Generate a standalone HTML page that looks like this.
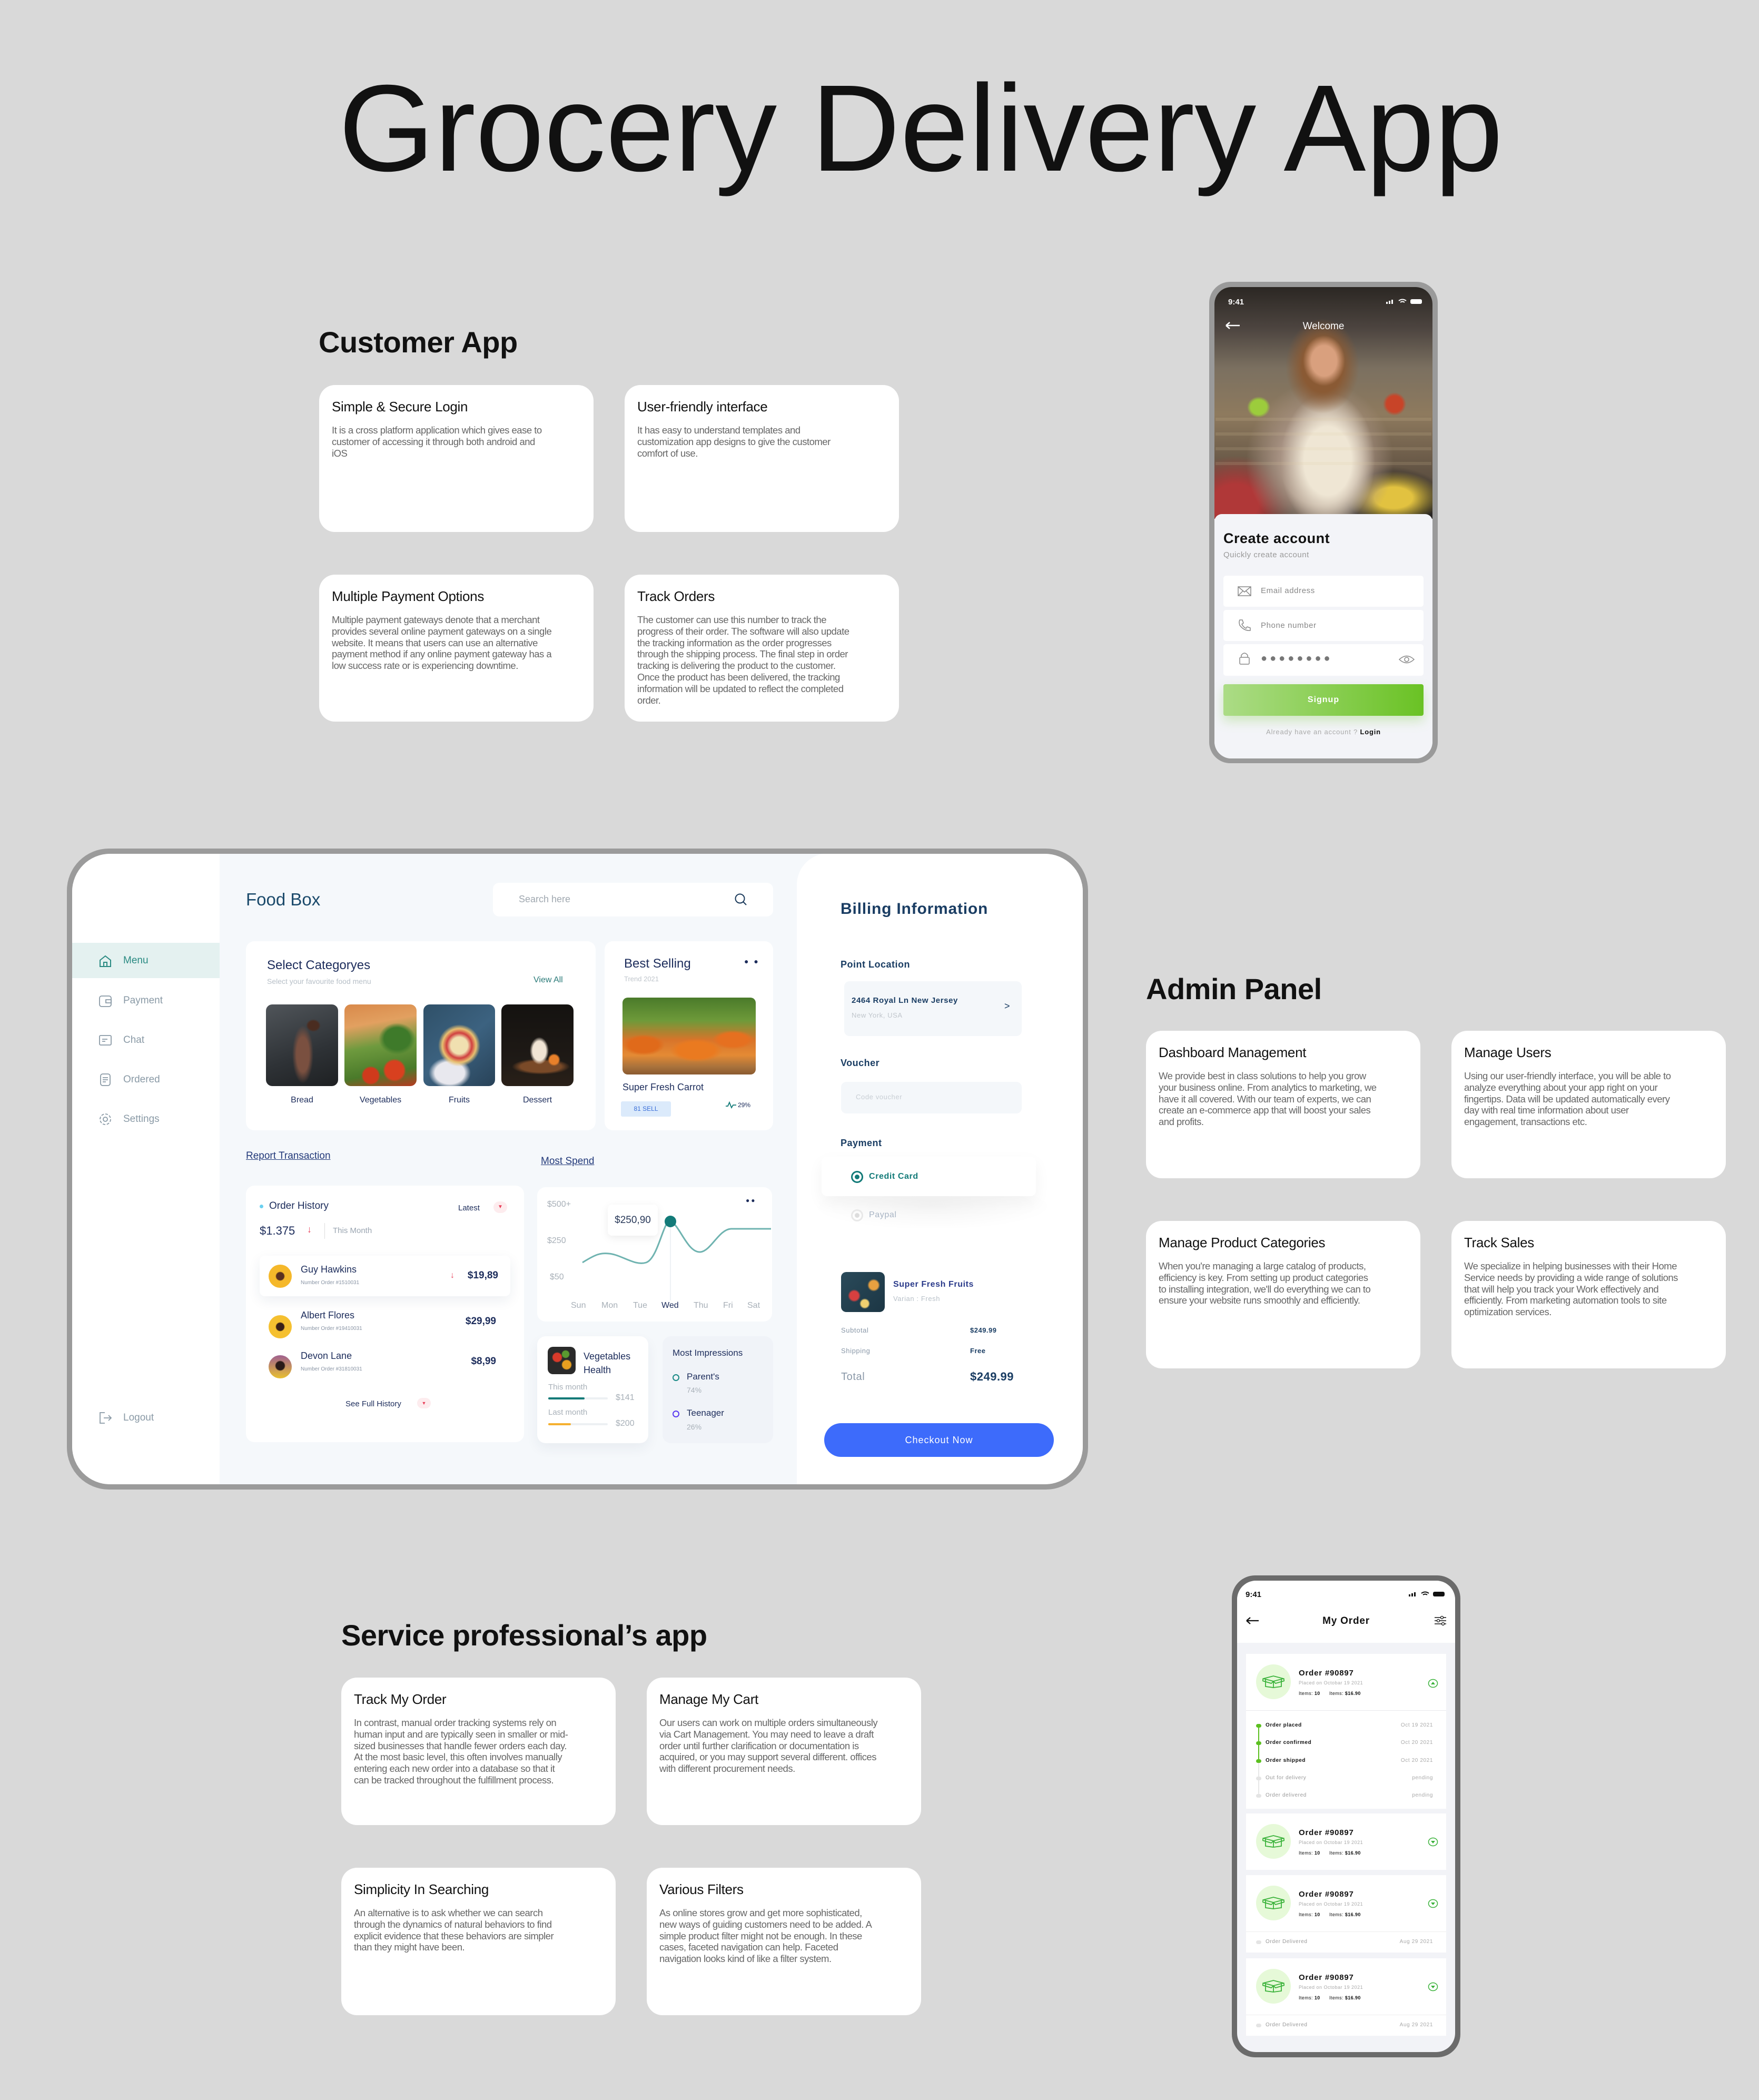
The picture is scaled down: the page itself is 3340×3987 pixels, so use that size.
<!DOCTYPE html>
<html><head><meta charset="utf-8">
<style>
*{margin:0;padding:0;box-sizing:border-box}
body{width:3340px;height:3987px;background:#d9d9d9;font-family:"Liberation Sans",sans-serif;position:relative;overflow:hidden}
.a{position:absolute}
.h2{position:absolute;font-size:56px;color:#111;font-weight:bold;letter-spacing:-0.5px}
.card{position:absolute;width:521px;background:#fff;border-radius:30px;padding:22px 24px}
.card h3{font-size:26px;font-weight:normal;color:#111;margin-top:4px;margin-bottom:18px;letter-spacing:-0.3px}
.card p{font-size:18.5px;line-height:21.8px;color:#666;letter-spacing:-0.5px;white-space:nowrap}
.n{color:#1c2c5b}
.g{color:#9aa5b1}
</style></head><body>

<div class="a" style="left:643px;top:128px;white-space:nowrap;font-size:234px;line-height:230px;color:#111">Grocery Delivery App</div>

<!-- Customer App -->
<div class="h2" style="left:605px;top:617px">Customer App</div>
<div class="card" style="left:606px;top:731px;height:279px"><h3>Simple &amp; Secure Login</h3><p>It is a cross platform application which gives ease to<br>customer of accessing it through both android and<br>iOS</p></div>
<div class="card" style="left:1186px;top:731px;height:279px"><h3>User-friendly interface</h3><p>It has easy to understand templates and<br>customization app designs to give the customer<br>comfort of use.</p></div>
<div class="card" style="left:606px;top:1091px;height:279px"><h3>Multiple Payment Options</h3><p>Multiple payment gateways denote that a merchant<br>provides several online payment gateways on a single<br>website. It means that users can use an alternative<br>payment method if any online payment gateway has a<br>low success rate or is experiencing downtime.</p></div>
<div class="card" style="left:1186px;top:1091px;height:279px"><h3>Track Orders</h3><p>The customer can use this number to track the<br>progress of their order. The software will also update<br>the tracking information as the order progresses<br>through the shipping process. The final step in order<br>tracking is delivering the product to the customer.<br>Once the product has been delivered, the tracking<br>information will be updated to reflect the completed<br>order.</p></div>

<!-- Phone 1 -->
<div class="a" style="left:2296px;top:535px;width:434px;height:914px;border-radius:40px;background:#9a9a9a"></div>
<div class="a" style="left:2306px;top:545px;width:414px;height:895px;border-radius:32px;background:#f3f4f8;overflow:hidden">
  <div class="a" style="left:0;top:0;width:414px;height:440px;background:
    radial-gradient(ellipse 40px 48px at 208px 140px,#d9a07e 60%,transparent 100%),
    radial-gradient(ellipse 70px 90px at 205px 150px,#8a5a34 55%,transparent 100%),
    radial-gradient(ellipse 90px 130px at 215px 330px,#efe6d4 50%,transparent 100%),
    radial-gradient(ellipse 140px 150px at 200px 330px,#a69182 55%,transparent 100%),
    radial-gradient(ellipse 90px 50px at 340px 400px,#e2c240 40%,transparent 100%),
    radial-gradient(ellipse 120px 80px at 330px 420px,#1e1e1e 55%,transparent 100%),
    radial-gradient(ellipse 110px 90px at 40px 410px,#b03838 40%,transparent 100%),
    radial-gradient(ellipse 22px 20px at 84px 228px,#9ccc3c 70%,transparent 100%),
    radial-gradient(ellipse 22px 22px at 342px 222px,#c84428 70%,transparent 100%),
    linear-gradient(180deg,#2b2723 0%,#4d4540 18%,#7b7060 35%,#8e7a5e 55%,#6a5a48 75%,#3e3630 100%)"></div>
  <div class="a" style="left:2px;top:226px;width:410px;height:120px;background:repeating-linear-gradient(180deg,transparent 0 22px,rgba(220,200,160,.25) 22px 28px);opacity:.6"></div>
  <div class="a" style="left:26px;top:20px;color:#fff;font-size:15px;font-weight:bold">9:41</div>
  <div class="a" style="left:326px;top:20px;width:70px;height:12px">
    <svg width="70" height="12"><rect x="0" y="7" width="3" height="4" fill="#fff"/><rect x="5" y="5" width="3" height="6" fill="#fff"/><rect x="10" y="3" width="3" height="8" fill="#fff"/><path d="M24 5 Q31 0 38 5 M27 8 Q31 5 35 8" stroke="#fff" stroke-width="2" fill="none"/><rect x="46" y="2" width="22" height="9" rx="3" fill="#fff"/></svg></div>
  <svg class="a" style="left:20px;top:65px" width="30" height="16"><path d="M2 8 H28 M2 8 L9 2 M2 8 L9 14" stroke="#fff" stroke-width="2.5" fill="none"/></svg>
  <div class="a" style="left:0;top:64px;width:414px;text-align:center;color:#fff;font-size:19px">Welcome</div>
  <div class="a" style="left:0;top:431px;width:414px;height:470px;background:#f3f4f8;border-radius:14px 14px 0 0"></div>
  <div class="a" style="left:17px;top:462px;font-size:27px;font-weight:bold;color:#111;letter-spacing:.5px">Create account</div>
  <div class="a" style="left:17px;top:500px;font-size:15px;color:#999;letter-spacing:.5px">Quickly create account</div>
  <div class="a" style="left:17px;top:548px;width:380px;height:59px;background:#fff;border-radius:5px"></div>
  <div class="a" style="left:17px;top:613px;width:380px;height:59px;background:#fff;border-radius:5px"></div>
  <div class="a" style="left:17px;top:678px;width:380px;height:60px;background:#fff;border-radius:5px"></div>
  <svg class="a" style="left:44px;top:568px" width="26" height="20"><rect x="1" y="1" width="24" height="17" fill="none" stroke="#888" stroke-width="1.5"/><path d="M1 1 L13 11 L25 1 M1 18 L10 9 M25 18 L16 9" stroke="#888" stroke-width="1.5" fill="none"/></svg>
  <div class="a" style="left:88px;top:568px;font-size:15px;color:#888;letter-spacing:.6px">Email address</div>
  <svg class="a" style="left:44px;top:630px" width="26" height="24"><path d="M4 2 L9 2 L11 8 L8 10 Q11 16 16 18 L18 15 L24 17 L24 22 Q12 23 4 12 Q2 6 4 2Z" fill="none" stroke="#888" stroke-width="1.5"/></svg>
  <div class="a" style="left:88px;top:634px;font-size:15px;color:#888;letter-spacing:.6px">Phone number</div>
  <svg class="a" style="left:47px;top:692px" width="20" height="26"><path d="M4 11 V7 Q10 -1 16 7 V11" fill="none" stroke="#888" stroke-width="1.5"/><rect x="1" y="11" width="18" height="13" rx="2" fill="none" stroke="#888" stroke-width="1.5"/></svg>
  <div class="a" style="left:88px;top:694px;font-size:20px;color:#777;letter-spacing:5px">●●●●●●●●</div>
  <svg class="a" style="left:350px;top:698px" width="30" height="18"><path d="M1 9 Q15 -4 29 9 Q15 22 1 9Z" fill="none" stroke="#888" stroke-width="1.5"/><circle cx="15" cy="9" r="4" fill="none" stroke="#888" stroke-width="1.5"/></svg>
  <div class="a" style="left:17px;top:754px;width:380px;height:60px;border-radius:4px;background:linear-gradient(90deg,#acdc86,#6ac224);box-shadow:0 10px 20px rgba(140,210,90,.35);color:#fff;font-weight:bold;font-size:16px;text-align:center;line-height:60px;letter-spacing:1px">Signup</div>
  <div class="a" style="left:0;top:837px;width:414px;text-align:center;font-size:13px;color:#aaa;letter-spacing:.8px">Already have an account ? <b style="color:#111">Login</b></div>
</div>

<!-- Dashboard -->
<div class="a" style="left:127px;top:1611px;width:1939px;height:1217px;border-radius:80px;background:#9b9b9b"></div>
<div class="a" style="left:137px;top:1621px;width:1919px;height:1197px;border-radius:72px;background:#f5f8fb;overflow:hidden">
  <div class="a" style="left:0;top:0;width:280px;height:1197px;background:#fff"></div>
  <div class="a" style="left:0;top:169px;width:280px;height:67px;background:#e4f1f0"></div>
  <div class="a" style="left:1376px;top:-1px;width:543px;height:1198px;background:#fff;border-radius:60px 0 0 0"></div>
</div>
<!-- sidebar items -->
<svg class="a" style="left:187px;top:1812px" width="26" height="26"><path d="M3 11 L13 3 L23 11 V23 H3Z M10 23 V15 H16 V23" fill="none" stroke="#2a8a82" stroke-width="2"/></svg>
<div class="a" style="left:234px;top:1813px;font-size:19px;color:#2a8a82">Menu</div>
<svg class="a" style="left:187px;top:1888px" width="26" height="26"><rect x="2" y="3" width="22" height="20" rx="4" fill="none" stroke="#8a9aa6" stroke-width="1.8"/><path d="M14 10 H24 V16 H14Z" fill="none" stroke="#8a9aa6" stroke-width="1.8"/></svg>
<div class="a" style="left:234px;top:1889px;font-size:19px;color:#8a9aa6">Payment</div>
<svg class="a" style="left:187px;top:1963px" width="26" height="26"><rect x="2" y="3" width="22" height="18" rx="2" fill="none" stroke="#8a9aa6" stroke-width="1.8"/><path d="M7 10 H17 M7 14 H13" stroke="#8a9aa6" stroke-width="1.8"/></svg>
<div class="a" style="left:234px;top:1964px;font-size:19px;color:#8a9aa6">Chat</div>
<svg class="a" style="left:189px;top:2037px" width="22" height="26"><rect x="2" y="2" width="18" height="22" rx="4" fill="none" stroke="#8a9aa6" stroke-width="1.8"/><path d="M6 9 H16 M6 13 H16 M6 17 H12" stroke="#8a9aa6" stroke-width="1.8"/></svg>
<div class="a" style="left:234px;top:2039px;font-size:19px;color:#8a9aa6">Ordered</div>
<svg class="a" style="left:187px;top:2112px" width="26" height="26"><circle cx="13" cy="13" r="4" fill="none" stroke="#8a9aa6" stroke-width="1.8"/><circle cx="13" cy="13" r="10" fill="none" stroke="#8a9aa6" stroke-width="1.8" stroke-dasharray="5 2.8"/></svg>
<div class="a" style="left:234px;top:2114px;font-size:19px;color:#8a9aa6">Settings</div>
<svg class="a" style="left:187px;top:2679px" width="26" height="26"><path d="M12 3 H3 V23 H12 M10 13 H24 M19 8 L24 13 L19 18" fill="none" stroke="#8a9aa6" stroke-width="1.8"/></svg>
<div class="a" style="left:234px;top:2681px;font-size:19px;color:#8a9aa6">Logout</div>

<div class="a" style="left:467px;top:1689px;font-size:33px;color:#1b4a6b">Food Box</div>
<div class="a" style="left:936px;top:1676px;width:532px;height:64px;background:#fff;border-radius:12px"></div>
<div class="a" style="left:985px;top:1697px;font-size:18px;color:#a0a8b0">Search here</div>
<svg class="a" style="left:1394px;top:1695px" width="26" height="26"><circle cx="11" cy="11" r="8.5" fill="none" stroke="#1b3a5b" stroke-width="2"/><path d="M17 17 L23 23" stroke="#1b3a5b" stroke-width="2"/></svg>

<div class="a" style="left:467px;top:1787px;width:664px;height:359px;background:#fff;border-radius:16px"></div>
<div class="a n" style="left:507px;top:1819px;font-size:24px">Select Categoryes</div>
<div class="a" style="left:507px;top:1855px;font-size:14px;color:#b8c0c8">Select your favourite food menu</div>
<div class="a" style="left:1013px;top:1852px;font-size:16px;color:#2a7a78">View All</div>
<div class="a" style="left:505px;top:1907px;width:137px;height:155px;border-radius:12px;background:radial-gradient(ellipse 20px 55px at 70px 95px,#7a5040 60%,transparent 100%),radial-gradient(ellipse 14px 12px at 90px 40px,#4a2c20 70%,transparent 100%),linear-gradient(160deg,#50555a,#2e3236 60%,#1e2022)"></div>
<div class="a" style="left:654px;top:1907px;width:137px;height:155px;border-radius:12px;background:radial-gradient(circle 22px at 95px 125px,#d8401f 80%,transparent 100%),radial-gradient(circle 18px at 50px 135px,#cf3a1c 80%,transparent 100%),radial-gradient(ellipse 35px 30px at 100px 65px,#3e7a2a 70%,transparent 100%),linear-gradient(170deg,#d9894a 0%,#e2a060 25%,#6e9a3e 50%,#4a7a2a 80%,#b83a20 100%)"></div>
<div class="a" style="left:804px;top:1907px;width:136px;height:155px;border-radius:12px;background:radial-gradient(circle 40px at 68px 78px,#f0e0b0 40%,#d04040 60%,#e8c070 80%,transparent 100%),radial-gradient(ellipse 40px 30px at 50px 130px,#e8e8ee 70%,transparent 100%),linear-gradient(140deg,#2f5068,#3c6280 50%,#284258)"></div>
<div class="a" style="left:952px;top:1907px;width:137px;height:155px;border-radius:12px;background:radial-gradient(ellipse 18px 26px at 72px 88px,#f0e4d4 70%,transparent 100%),radial-gradient(circle 12px at 100px 105px,#e8802a 70%,transparent 100%),radial-gradient(ellipse 55px 15px at 75px 118px,#7a4a28 70%,transparent 100%),linear-gradient(180deg,#141210,#1f1a16 70%,#2a2018)"></div>
<div class="a n" style="left:505px;top:2080px;width:137px;text-align:center;font-size:16px">Bread</div>
<div class="a n" style="left:654px;top:2080px;width:137px;text-align:center;font-size:16px">Vegetables</div>
<div class="a n" style="left:804px;top:2080px;width:136px;text-align:center;font-size:16px">Fruits</div>
<div class="a n" style="left:952px;top:2080px;width:137px;text-align:center;font-size:16px">Dessert</div>

<div class="a" style="left:1148px;top:1787px;width:320px;height:359px;background:#fff;border-radius:16px"></div>
<div class="a n" style="left:1185px;top:1816px;font-size:24px">Best Selling</div>
<div class="a" style="left:1413px;top:1817px;font-size:14px;color:#1c2c5b;letter-spacing:3px">● ●</div>
<div class="a" style="left:1185px;top:1851px;font-size:13px;color:#c0c6cc">Trend 2021</div>
<div class="a" style="left:1182px;top:1894px;width:253px;height:146px;border-radius:10px;background:radial-gradient(ellipse 40px 20px at 40px 90px,#e06a1a 70%,transparent 100%),radial-gradient(ellipse 50px 22px at 140px 100px,#ea7a20 70%,transparent 100%),radial-gradient(ellipse 40px 18px at 210px 80px,#e67020 70%,transparent 100%),linear-gradient(180deg,#4a7a2a 0%,#6e9a3a 30%,#d8742a 55%,#e48a34 75%,#a8723c 90%,#8a5a30)"></div>
<div class="a n" style="left:1182px;top:2054px;font-size:18px">Super Fresh Carrot</div>
<div class="a" style="left:1179px;top:2091px;width:95px;height:29px;background:#dbeafb;border-radius:3px;font-size:12px;color:#3a6ed8;text-align:center;line-height:29px">81 SELL</div>
<svg class="a" style="left:1377px;top:2090px" width="22" height="16"><path d="M1 10 H5 L8 3 L12 13 L15 8 H21" fill="none" stroke="#127a78" stroke-width="1.8"/></svg>
<div class="a n" style="left:1401px;top:2091px;font-size:12px">29%</div>

<div class="a" style="left:467px;top:2184px;font-size:19px;color:#233a7a;text-decoration:underline">Report Transaction</div>
<div class="a" style="left:1027px;top:2194px;font-size:19px;color:#233a7a;text-decoration:underline">Most Spend</div>

<div class="a" style="left:467px;top:2251px;width:528px;height:487px;background:#fff;border-radius:16px"></div>
<div class="a" style="left:493px;top:2287px;width:7px;height:7px;border-radius:50%;background:#6ad0f0"></div>
<div class="a n" style="left:511px;top:2279px;font-size:19px">Order History</div>
<div class="a n" style="left:870px;top:2285px;font-size:15px">Latest</div>
<div class="a" style="left:937px;top:2281px;width:26px;height:22px;border-radius:11px;background:#fdecee;color:#e8405a;font-size:10px;text-align:center;line-height:22px">▼</div>
<div class="a n" style="left:493px;top:2324px;font-size:22px">$1.375</div>
<div class="a" style="left:583px;top:2324px;font-size:18px;color:#e8405a">↓</div>
<div class="a" style="left:616px;top:2322px;width:1px;height:30px;background:#ddd"></div>
<div class="a" style="left:632px;top:2328px;font-size:15px;color:#9aa5b1">This Month</div>
<div class="a" style="left:493px;top:2384px;width:476px;height:77px;background:#fff;border-radius:10px;box-shadow:0 8px 24px rgba(30,50,90,.08)"></div>
<div class="a" style="left:510px;top:2401px;width:44px;height:44px;border-radius:50%;background:radial-gradient(circle 9px at 22px 22px,#5a3020 80%,transparent 100%),#f5b82a"></div>
<div class="a n" style="left:571px;top:2400px;font-size:18px">Guy Hawkins</div>
<div class="a" style="left:571px;top:2430px;font-size:10px;color:#8a95a5">Number Order #1510031</div>
<div class="a" style="left:855px;top:2413px;font-size:16px;color:#e8405a">↓</div>
<div class="a n" style="left:883px;top:2411px;width:63px;text-align:right;font-size:19px;font-weight:bold">$19,89</div>
<div class="a" style="left:510px;top:2497px;width:44px;height:44px;border-radius:50%;background:radial-gradient(circle 9px at 22px 22px,#3a2018 80%,transparent 100%),#f5c030"></div>
<div class="a n" style="left:571px;top:2487px;font-size:18px">Albert Flores</div>
<div class="a" style="left:571px;top:2517px;font-size:10px;color:#8a95a5">Number Order #19410031</div>
<div class="a n" style="left:870px;top:2498px;width:72px;text-align:right;font-size:19px;font-weight:bold">$29,99</div>
<div class="a" style="left:510px;top:2573px;width:44px;height:44px;border-radius:50%;background:radial-gradient(circle 10px at 22px 20px,#2a1a18 80%,transparent 100%),linear-gradient(180deg,#a06090,#e8c030)"></div>
<div class="a n" style="left:571px;top:2564px;font-size:18px">Devon Lane</div>
<div class="a" style="left:571px;top:2594px;font-size:10px;color:#8a95a5">Number Order #31810031</div>
<div class="a n" style="left:870px;top:2574px;width:72px;text-align:right;font-size:19px;font-weight:bold">$8,99</div>
<div class="a n" style="left:656px;top:2657px;font-size:15px">See Full History</div>
<div class="a" style="left:792px;top:2654px;width:26px;height:20px;border-radius:10px;background:#fdecee;color:#e8405a;font-size:9px;text-align:center;line-height:20px">▼</div>

<div class="a" style="left:1020px;top:2254px;width:446px;height:255px;background:#fff;border-radius:16px">
  <svg width="446" height="255" style="position:absolute;left:0;top:0">
    <line x1="253" y1="65" x2="253" y2="215" stroke="#e8eef2" stroke-width="1.5"/>
    <path d="M86,143 C110,128 120,124 136,126 C160,128 185,150 207,143 C230,135 240,60 253,65 C270,70 285,125 310,123 C330,121 345,80 368,79 L444,79" fill="none" stroke="#6fb3b0" stroke-width="3"/>
    <circle cx="253" cy="65" r="11" fill="#127a78"/>
  </svg>
  <div class="a" style="left:134px;top:33px;width:95px;height:59px;background:#fff;border-radius:8px;box-shadow:0 4px 16px rgba(0,0,0,.08);font-size:19px;color:#2a3a5a;text-align:center;line-height:59px">$250,90</div>
  <div class="a" style="left:19px;top:24px;font-size:16px;color:#a8b0b8">$500+</div>
  <div class="a" style="left:19px;top:93px;font-size:16px;color:#a8b0b8">$250</div>
  <div class="a" style="left:24px;top:162px;font-size:16px;color:#a8b0b8">$50</div>
  <div class="a" style="left:396px;top:18px;font-size:12px;color:#1c2c5b;letter-spacing:3px">●●</div>
  <div class="a" style="left:64px;top:216px;font-size:16px;color:#a8b0b8">Sun</div>
  <div class="a" style="left:122px;top:216px;font-size:16px;color:#a8b0b8">Mon</div>
  <div class="a" style="left:182px;top:216px;font-size:16px;color:#a8b0b8">Tue</div>
  <div class="a n" style="left:236px;top:216px;font-size:16px">Wed</div>
  <div class="a" style="left:297px;top:216px;font-size:16px;color:#a8b0b8">Thu</div>
  <div class="a" style="left:353px;top:216px;font-size:16px;color:#a8b0b8">Fri</div>
  <div class="a" style="left:399px;top:216px;font-size:16px;color:#a8b0b8">Sat</div>
</div>

<div class="a" style="left:1020px;top:2537px;width:211px;height:203px;background:#fff;border-radius:16px;box-shadow:0 10px 24px rgba(30,50,90,.06)"></div>
<div class="a" style="left:1040px;top:2557px;width:53px;height:52px;border-radius:10px;background:radial-gradient(circle 10px at 18px 20px,#d83a2a 80%,transparent 100%),radial-gradient(circle 10px at 36px 34px,#e8a020 80%,transparent 100%),radial-gradient(circle 8px at 34px 14px,#5a9a30 80%,transparent 100%),#2a2a2a"></div>
<div class="a n" style="left:1108px;top:2562px;font-size:18px;line-height:26px">Vegetables<br>Health</div>
<div class="a" style="left:1041px;top:2625px;font-size:15px;color:#a8b0b8">This month</div>
<div class="a" style="left:1041px;top:2653px;width:113px;height:4px;background:#edf0f3;border-radius:2px"><div style="width:69px;height:4px;background:#127a78;border-radius:2px"></div></div>
<div class="a" style="left:1169px;top:2645px;font-size:16px;color:#a8b0b8">$141</div>
<div class="a" style="left:1041px;top:2673px;font-size:15px;color:#a8b0b8">Last month</div>
<div class="a" style="left:1041px;top:2702px;width:113px;height:4px;background:#edf0f3;border-radius:2px"><div style="width:43px;height:4px;background:#f5b030;border-radius:2px"></div></div>
<div class="a" style="left:1169px;top:2694px;font-size:16px;color:#a8b0b8">$200</div>

<div class="a" style="left:1258px;top:2537px;width:210px;height:203px;background:#f0f3f8;border-radius:16px"></div>
<div class="a n" style="left:1277px;top:2559px;font-size:17px">Most Impressions</div>
<div class="a" style="left:1277px;top:2609px;width:13px;height:13px;border-radius:50%;border:2.5px solid #1a8a86"></div>
<div class="a n" style="left:1304px;top:2604px;font-size:17px">Parent's</div>
<div class="a" style="left:1304px;top:2631px;font-size:14px;color:#a8b0b8">74%</div>
<div class="a" style="left:1277px;top:2678px;width:13px;height:13px;border-radius:50%;border:2.5px solid #5a3af0"></div>
<div class="a n" style="left:1304px;top:2673px;font-size:17px">Teenager</div>
<div class="a" style="left:1304px;top:2701px;font-size:14px;color:#a8b0b8">26%</div>

<!-- Billing -->
<div class="a" style="left:1596px;top:1709px;font-size:30px;font-weight:bold;color:#1a3d63;letter-spacing:.8px">Billing Information</div>
<div class="a" style="left:1596px;top:1821px;font-size:18px;font-weight:bold;color:#1a3d63;letter-spacing:.5px">Point Location</div>
<div class="a" style="left:1603px;top:1863px;width:337px;height:104px;background:#f4f7fa;border-radius:10px"></div>
<div class="a" style="left:1617px;top:1891px;font-size:15px;font-weight:bold;color:#1a3d63;letter-spacing:.6px">2464 Royal Ln New Jersey</div>
<div class="a" style="left:1617px;top:1920px;font-size:13px;color:#c0c6cc;letter-spacing:.6px">New York, USA</div>
<div class="a" style="left:1907px;top:1900px;font-size:18px;color:#1a3d63">&gt;</div>
<div class="a" style="left:1596px;top:2008px;font-size:18px;font-weight:bold;color:#1a3d63;letter-spacing:.5px">Voucher</div>
<div class="a" style="left:1597px;top:2054px;width:343px;height:60px;background:#f4f7fa;border-radius:10px"></div>
<div class="a" style="left:1625px;top:2075px;font-size:13px;color:#c8ced4;letter-spacing:.6px">Code voucher</div>
<div class="a" style="left:1596px;top:2160px;font-size:18px;font-weight:bold;color:#1a3d63;letter-spacing:.5px">Payment</div>
<div class="a" style="left:1540px;top:2270px;width:460px;height:90px;background:radial-gradient(ellipse 230px 45px at 230px 20px,rgba(0,0,0,.04),transparent)"></div>
<div class="a" style="left:1560px;top:2196px;width:407px;height:75px;background:#fff;border-radius:10px;box-shadow:0 12px 30px rgba(0,0,0,.05)"></div>
<div class="a" style="left:1616px;top:2223px;width:23px;height:23px;border-radius:50%;border:3px solid #127a78"><div style="width:9px;height:9px;border-radius:50%;background:#127a78;margin:4px"></div></div>
<div class="a" style="left:1650px;top:2225px;font-size:16px;font-weight:bold;color:#127a78;letter-spacing:.6px">Credit Card</div>
<div class="a" style="left:1616px;top:2296px;width:23px;height:23px;border-radius:50%;border:3px solid #e8e8e8"><div style="width:9px;height:9px;border-radius:50%;background:#ddd;margin:4px"></div></div>
<div class="a" style="left:1650px;top:2298px;font-size:16px;color:#a8b4c4;letter-spacing:.6px">Paypal</div>
<div class="a" style="left:1597px;top:2415px;width:83px;height:76px;border-radius:10px;background:radial-gradient(circle 12px at 25px 45px,#d84040 70%,transparent 100%),radial-gradient(circle 12px at 62px 25px,#e8a040 70%,transparent 100%),radial-gradient(circle 10px at 45px 60px,#f0d070 70%,transparent 100%),linear-gradient(135deg,#2a4a5a,#1c3644)"></div>
<div class="a" style="left:1696px;top:2430px;font-size:16px;font-weight:bold;color:#2a3a8a;letter-spacing:.6px">Super Fresh Fruits</div>
<div class="a" style="left:1696px;top:2458px;font-size:13px;color:#b8c0c8;letter-spacing:.6px">Varian : Fresh</div>
<div class="a" style="left:1597px;top:2518px;font-size:13px;color:#8a98a8;letter-spacing:.6px">Subtotal</div>
<div class="a" style="left:1842px;top:2518px;font-size:13px;font-weight:bold;color:#1a3d63;letter-spacing:.5px">$249.99</div>
<div class="a" style="left:1597px;top:2557px;font-size:13px;color:#8a98a8;letter-spacing:.6px">Shipping</div>
<div class="a" style="left:1842px;top:2557px;font-size:13px;font-weight:bold;color:#1a3d63;letter-spacing:.5px">Free</div>
<div class="a" style="left:1597px;top:2603px;font-size:20px;color:#8a98a8;letter-spacing:.6px">Total</div>
<div class="a" style="left:1842px;top:2601px;font-size:22px;font-weight:bold;color:#1a3d63;letter-spacing:.5px">$249.99</div>
<div class="a" style="left:1565px;top:2702px;width:436px;height:64px;background:#3d6bfb;border-radius:32px;color:#fff;font-size:18px;text-align:center;line-height:64px;letter-spacing:1px">Checkout Now</div>

<!-- Admin -->
<div class="h2" style="left:2176px;top:1845px">Admin Panel</div>
<div class="card" style="left:2176px;top:1957px;height:280px"><h3>Dashboard Management</h3><p>We provide best in class solutions to help you grow<br>your business online. From analytics to marketing, we<br>have it all covered. With our team of experts, we can<br>create an e-commerce app that will boost your sales<br>and profits.</p></div>
<div class="card" style="left:2756px;top:1957px;height:280px"><h3>Manage Users</h3><p>Using our user-friendly interface, you will be able to<br>analyze everything about your app right on your<br>fingertips. Data will be updated automatically every<br>day with real time information about user<br>engagement, transactions etc.</p></div>
<div class="card" style="left:2176px;top:2318px;height:280px"><h3>Manage Product Categories</h3><p>When you're managing a large catalog of products,<br>efficiency is key. From setting up product categories<br>to installing integration, we'll do everything we can to<br>ensure your website runs smoothly and efficiently.</p></div>
<div class="card" style="left:2756px;top:2318px;height:280px"><h3>Track Sales</h3><p>We specialize in helping businesses with their Home<br>Service needs by providing a wide range of solutions<br>that will help you track your Work effectively and<br>efficiently. From marketing automation tools to site<br>optimization services.</p></div>

<!-- Service -->
<div class="h2" style="left:648px;top:3072px">Service professional’s app</div>
<div class="card" style="left:648px;top:3185px;height:280px"><h3>Track My Order</h3><p>In contrast, manual order tracking systems rely on<br>human input and are typically seen in smaller or mid-<br>sized businesses that handle fewer orders each day.<br>At the most basic level, this often involves manually<br>entering each new order into a database so that it<br>can be tracked throughout the fulfillment process.</p></div>
<div class="card" style="left:1228px;top:3185px;height:280px"><h3>Manage My Cart</h3><p>Our users can work on multiple orders simultaneously<br>via Cart Management. You may need to leave a draft<br>order until further clarification or documentation is<br>acquired, or you may support several different. offices<br>with different procurement needs.</p></div>
<div class="card" style="left:648px;top:3546px;height:280px"><h3>Simplicity In Searching</h3><p>An alternative is to ask whether we can search<br>through the dynamics of natural behaviors to find<br>explicit evidence that these behaviors are simpler<br>than they might have been.</p></div>
<div class="card" style="left:1228px;top:3546px;height:280px"><h3>Various Filters</h3><p>As online stores grow and get more sophisticated,<br>new ways of guiding customers need to be added. A<br>simple product filter might not be enough. In these<br>cases, faceted navigation can help. Faceted<br>navigation looks kind of like a filter system.</p></div>

<!-- Phone 2 -->
<div class="a" style="left:2339px;top:2991px;width:434px;height:915px;border-radius:44px;background:#6b6b6b"></div>
<div class="a" style="left:2349px;top:3001px;width:414px;height:895px;border-radius:36px;background:#f2f3f7;overflow:hidden">
  <div class="a" style="left:0;top:0;width:414px;height:118px;background:#fff"></div>
  <div class="a" style="left:16px;top:18px;font-size:15px;font-weight:bold;color:#111">9:41</div>
  <svg class="a" style="left:326px;top:19px" width="70" height="12"><rect x="0" y="7" width="3" height="4" fill="#111"/><rect x="5" y="5" width="3" height="6" fill="#111"/><rect x="10" y="3" width="3" height="8" fill="#111"/><path d="M24 5 Q31 0 38 5 M27 8 Q31 5 35 8" stroke="#111" stroke-width="2" fill="none"/><rect x="46" y="2" width="22" height="9" rx="3" fill="#111"/></svg>
  <svg class="a" style="left:16px;top:68px" width="26" height="16"><path d="M2 8 H25 M2 8 L9 2 M2 8 L9 14" stroke="#111" stroke-width="2.2" fill="none"/></svg>
  <div class="a" style="left:0;top:66px;width:414px;text-align:center;font-size:19px;font-weight:bold;color:#111;letter-spacing:.8px">My Order</div>
  <svg class="a" style="left:374px;top:66px" width="24" height="20"><path d="M1 4 H23 M1 10 H23 M1 16 H23" stroke="#111" stroke-width="1.5"/><circle cx="15" cy="4" r="2.5" fill="#fff" stroke="#111" stroke-width="1.3"/><circle cx="8" cy="10" r="2.5" fill="#fff" stroke="#111" stroke-width="1.3"/><circle cx="17" cy="16" r="2.5" fill="#fff" stroke="#111" stroke-width="1.3"/></svg>
</div>
<div class="a" style="left:2366px;top:3140px;width:380px;height:294px;background:#fff"></div>
<div class="a" style="left:2366px;top:3247px;width:380px;height:1px;background:#e8e8ec"></div>
<div class="a" style="left:2366px;top:3443px;width:380px;height:107px;background:#fff"></div>
<div class="a" style="left:2366px;top:3560px;width:380px;height:147px;background:#fff"></div>
<div class="a" style="left:2366px;top:3667px;width:380px;height:1px;background:#eee"></div>
<div class="a" style="left:2366px;top:3718px;width:380px;height:147px;background:#fff"></div>
<div class="a" style="left:2366px;top:3825px;width:380px;height:1px;background:#eee"></div>

<div class="a" style="left:2385px;top:3160px;width:66px;height:66px;border-radius:50%;background:#e6f9d8"></div>
<div class="a" style="left:2385px;top:3463px;width:66px;height:66px;border-radius:50%;background:#e6f9d8"></div>
<div class="a" style="left:2385px;top:3580px;width:66px;height:66px;border-radius:50%;background:#e6f9d8"></div>
<div class="a" style="left:2385px;top:3738px;width:66px;height:66px;border-radius:50%;background:#e6f9d8"></div>
<svg class="a" style="left:2397px;top:3181px" width="42" height="24"><path d="M2 6 L21 1 L40 6 L21 11Z M6 7 V21 L21 23 L36 21 V7 M21 11 V23 M2 6 L0 10 L17 15 L21 11 M40 6 L42 10 L25 15 L21 11" fill="none" stroke="#3ab23a" stroke-width="1.8"/></svg>
<svg class="a" style="left:2397px;top:3484px" width="42" height="24"><path d="M2 6 L21 1 L40 6 L21 11Z M6 7 V21 L21 23 L36 21 V7 M21 11 V23 M2 6 L0 10 L17 15 L21 11 M40 6 L42 10 L25 15 L21 11" fill="none" stroke="#3ab23a" stroke-width="1.8"/></svg>
<svg class="a" style="left:2397px;top:3601px" width="42" height="24"><path d="M2 6 L21 1 L40 6 L21 11Z M6 7 V21 L21 23 L36 21 V7 M21 11 V23 M2 6 L0 10 L17 15 L21 11 M40 6 L42 10 L25 15 L21 11" fill="none" stroke="#3ab23a" stroke-width="1.8"/></svg>
<svg class="a" style="left:2397px;top:3759px" width="42" height="24"><path d="M2 6 L21 1 L40 6 L21 11Z M6 7 V21 L21 23 L36 21 V7 M21 11 V23 M2 6 L0 10 L17 15 L21 11 M40 6 L42 10 L25 15 L21 11" fill="none" stroke="#3ab23a" stroke-width="1.8"/></svg>

<div class="a" style="left:2466px;top:3168px;font-size:15px;font-weight:bold;color:#111;letter-spacing:.8px">Order #90897</div>
<div class="a" style="left:2466px;top:3190px;font-size:9px;color:#aaa;letter-spacing:.5px">Placed on Octobar 19 2021</div>
<div class="a" style="left:2466px;top:3210px;font-size:9px;color:#111;letter-spacing:.4px">Items: <b>10</b> &nbsp;&nbsp;&nbsp;&nbsp;&nbsp;Items: <b>$16.90</b></div>
<div class="a" style="left:2466px;top:3471px;font-size:15px;font-weight:bold;color:#111;letter-spacing:.8px">Order #90897</div>
<div class="a" style="left:2466px;top:3493px;font-size:9px;color:#aaa;letter-spacing:.5px">Placed on Octobar 19 2021</div>
<div class="a" style="left:2466px;top:3513px;font-size:9px;color:#111;letter-spacing:.4px">Items: <b>10</b> &nbsp;&nbsp;&nbsp;&nbsp;&nbsp;Items: <b>$16.90</b></div>
<div class="a" style="left:2466px;top:3588px;font-size:15px;font-weight:bold;color:#111;letter-spacing:.8px">Order #90897</div>
<div class="a" style="left:2466px;top:3610px;font-size:9px;color:#aaa;letter-spacing:.5px">Placed on Octobar 19 2021</div>
<div class="a" style="left:2466px;top:3630px;font-size:9px;color:#111;letter-spacing:.4px">Items: <b>10</b> &nbsp;&nbsp;&nbsp;&nbsp;&nbsp;Items: <b>$16.90</b></div>
<div class="a" style="left:2466px;top:3746px;font-size:15px;font-weight:bold;color:#111;letter-spacing:.8px">Order #90897</div>
<div class="a" style="left:2466px;top:3768px;font-size:9px;color:#aaa;letter-spacing:.5px">Placed on Octobar 19 2021</div>
<div class="a" style="left:2466px;top:3788px;font-size:9px;color:#111;letter-spacing:.4px">Items: <b>10</b> &nbsp;&nbsp;&nbsp;&nbsp;&nbsp;Items: <b>$16.90</b></div>

<svg class="a" style="left:2711px;top:3187px" width="20" height="18"><ellipse cx="10" cy="9" rx="8.5" ry="7.5" fill="none" stroke="#3ab23a" stroke-width="1.5"/><path d="M6 11 L10 6 L14 11Z" fill="#3ab23a"/></svg>
<svg class="a" style="left:2711px;top:3488px" width="20" height="18"><ellipse cx="10" cy="9" rx="8.5" ry="7.5" fill="none" stroke="#3ab23a" stroke-width="1.5"/><path d="M6 7 L10 12 L14 7Z" fill="#3ab23a"/></svg>
<svg class="a" style="left:2711px;top:3605px" width="20" height="18"><ellipse cx="10" cy="9" rx="8.5" ry="7.5" fill="none" stroke="#3ab23a" stroke-width="1.5"/><path d="M6 7 L10 12 L14 7Z" fill="#3ab23a"/></svg>
<svg class="a" style="left:2711px;top:3763px" width="20" height="18"><ellipse cx="10" cy="9" rx="8.5" ry="7.5" fill="none" stroke="#3ab23a" stroke-width="1.5"/><path d="M6 7 L10 12 L14 7Z" fill="#3ab23a"/></svg>

<div class="a" style="left:2389px;top:3276px;width:2px;height:67px;background:#5cc020"></div>
<div class="a" style="left:2389px;top:3343px;width:2px;height:66px;background:#e8e8e8"></div>
<div class="a" style="left:2385px;top:3273px;width:10px;height:7px;border-radius:4px;background:#5cc020"></div>
<div class="a" style="left:2385px;top:3306px;width:10px;height:7px;border-radius:4px;background:#5cc020"></div>
<div class="a" style="left:2385px;top:3340px;width:10px;height:7px;border-radius:4px;background:#5cc020"></div>
<div class="a" style="left:2385px;top:3373px;width:10px;height:7px;border-radius:4px;background:#e4e4e4"></div>
<div class="a" style="left:2385px;top:3406px;width:10px;height:7px;border-radius:4px;background:#e4e4e4"></div>
<div class="a" style="left:2403px;top:3270px;font-size:10px;font-weight:bold;color:#111;letter-spacing:.6px">Order placed</div>
<div class="a" style="left:2403px;top:3303px;font-size:10px;font-weight:bold;color:#111;letter-spacing:.6px">Order confirmed</div>
<div class="a" style="left:2403px;top:3337px;font-size:10px;font-weight:bold;color:#111;letter-spacing:.6px">Order shipped</div>
<div class="a" style="left:2403px;top:3370px;font-size:10px;color:#999;letter-spacing:.6px">Out for delivery</div>
<div class="a" style="left:2403px;top:3403px;font-size:10px;color:#999;letter-spacing:.6px">Order delivered</div>
<div class="a" style="left:2621px;top:3270px;width:100px;text-align:right;font-size:10px;color:#aaa;letter-spacing:.6px">Oct 19 2021</div>
<div class="a" style="left:2621px;top:3303px;width:100px;text-align:right;font-size:10px;color:#aaa;letter-spacing:.6px">Oct 20 2021</div>
<div class="a" style="left:2621px;top:3337px;width:100px;text-align:right;font-size:10px;color:#aaa;letter-spacing:.6px">Oct 20 2021</div>
<div class="a" style="left:2621px;top:3370px;width:100px;text-align:right;font-size:10px;color:#aaa;letter-spacing:.6px">pending</div>
<div class="a" style="left:2621px;top:3403px;width:100px;text-align:right;font-size:10px;color:#aaa;letter-spacing:.6px">pending</div>
<div class="a" style="left:2385px;top:3684px;width:10px;height:7px;border-radius:4px;background:#e4e4e4"></div>
<div class="a" style="left:2403px;top:3681px;font-size:10px;color:#999;letter-spacing:.6px">Order Delivered</div>
<div class="a" style="left:2621px;top:3681px;width:100px;text-align:right;font-size:10px;color:#aaa;letter-spacing:.6px">Aug 29 2021</div>
<div class="a" style="left:2385px;top:3842px;width:10px;height:7px;border-radius:4px;background:#e4e4e4"></div>
<div class="a" style="left:2403px;top:3839px;font-size:10px;color:#999;letter-spacing:.6px">Order Delivered</div>
<div class="a" style="left:2621px;top:3839px;width:100px;text-align:right;font-size:10px;color:#aaa;letter-spacing:.6px">Aug 29 2021</div>

</body></html>
